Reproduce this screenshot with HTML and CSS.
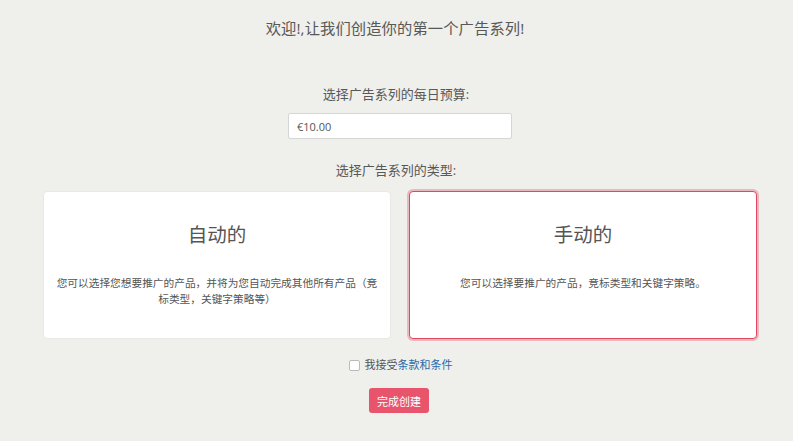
FILE: index.html
```html
<!DOCTYPE html>
<html lang="zh-CN">
<head>
<meta charset="utf-8">
<link rel="stylesheet" href="styles.css">
</head>
<body>
<div class="page">
  <h1 class="title">欢迎!,让我们创造你的第一个广告系列!</h1>
  <div class="content">
    <div class="label budget-label">选择广告系列的每日预算:</div>
    <input class="budget" type="text" value="€10.00">
    <div class="label type-label">选择广告系列的类型:</div>
    <div class="cards">
      <div class="card">
        <div class="card-title">自动的</div>
        <div class="card-text">您可以选择您想要推广的产品，并将为您自动完成其他所有产品（竞标类型，关键字策略等）</div>
      </div>
      <div class="card selected">
        <div class="card-title">手动的</div>
        <div class="card-text">您可以选择要推广的产品，竞标类型和关键字策略。</div>
      </div>
    </div>
    <label class="terms"><span class="checkbox"></span>我接受<a class="link">条款和条件</a></label>
    <button class="submit">完成创建</button>
  </div>
</div>
</body>
</html>
```
FILE: styles.css
```css
html, body {
  margin: 0;
  padding: 0;
  background: #efefeb;
}
body {
  font-family: "Open Sans", "Noto Sans CJK SC", sans-serif;
  color: #555;
  width: 793px;
  height: 441px;
  overflow: hidden;
}
.page {
  display: flex;
  flex-direction: column;
  align-items: stretch;
}
.title {
  margin: 17px 0 0 0;
  font-size: 15.3px;
  font-weight: normal;
  line-height: 22px;
  text-align: center;
  color: #585858;
  padding-right: 3px;
  letter-spacing: 0.1px;
}
.content {
  display: flex;
  flex-direction: column;
  align-items: center;
  padding: 0 36px 0 43px;
}
.label {
  font-size: 13px;
  line-height: 20px;
  color: #585858;
}
.budget-label {
  margin-top: 45px;
  padding-right: 8px;
}
.budget {
  margin-top: 9px;
  box-sizing: border-box;
  width: 224px;
  height: 26px;
  border: 1px solid #d6d6d6;
  border-radius: 2px;
  background: #fff;
  font-family: "Open Sans", "Noto Sans CJK SC", sans-serif;
  font-size: 11px;
  color: #555;
  padding: 0 8px;
  outline: none;
}
.type-label {
  margin-top: 21px;
  padding-right: 8px;
}
.cards {
  margin-top: 11px;
  align-self: stretch;
  display: grid;
  grid-template-columns: 348px 348px;
  justify-content: space-between;
}
.card {
  box-sizing: border-box;
  height: 148px;
  background: #fff;
  border: 1px solid #e8e8e4;
  border-radius: 4px;
  display: flex;
  flex-direction: column;
  align-items: center;
  padding: 28px 12px 0;
}
.card.selected {
  border: 1px solid #e0485f;
  box-shadow: 0 0 0 2px rgba(232, 84, 108, 0.35);
}
.card-title {
  font-size: 19.5px;
  line-height: 30px;
  color: #555;
}
.card-text {
  margin-top: 25px;
  font-size: 10.7px;
  line-height: 16px;
  text-align: center;
  color: #555;
}
.terms {
  margin-top: 18px;
  display: flex;
  align-items: center;
  font-size: 11px;
  line-height: 16px;
  color: #555;
  padding-left: 1px;
}
.checkbox {
  width: 9px;
  height: 9px;
  border: 1px solid #bbb;
  border-radius: 2px;
  background: #fff;
  margin-right: 5px;
}
.link {
  color: #2a6aa8;
  text-decoration: none;
}
.submit {
  margin-top: 15px;
  width: 60px;
  height: 25px;
  border: none;
  border-radius: 3px;
  background: #e8546c;
  color: #fff;
  font-family: "Open Sans", "Noto Sans CJK SC", sans-serif;
  font-size: 11px;
  padding: 0;
  margin-right: 2px;
}
```
